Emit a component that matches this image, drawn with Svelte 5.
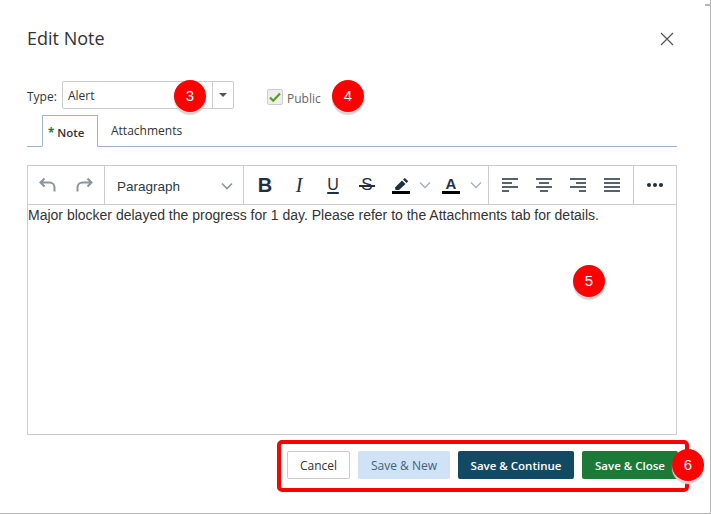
<script>
  const buttons = [
    { label: "Cancel", cls: "cancel" },
    { label: "Save & New", cls: "new" },
    { label: "Save & Continue", cls: "cont" },
    { label: "Save & Close", cls: "close" },
  ];
</script>

<main class="dialog">
  <div class="corner"></div>
  <header>
    <h1>Edit Note</h1>
    <svg class="x" width="14" height="14" viewBox="0 0 14 14"><path d="M1 1l12 12M13 1L1 13" stroke="#555" stroke-width="1.2" fill="none" /></svg>
  </header>

  <div class="type-row">
    <span class="type-label">Type:</span>
    <div class="select">
      <span class="value">Alert</span>
      <span class="arrow"><i></i></span>
    </div>
    <label class="public">
      <span class="check">
        <svg width="14" height="12" viewBox="0 0 14 12"><path d="M2 6.5l3.2 3.2L12 2.5" stroke="#5a9e1f" stroke-width="2.2" fill="none" /></svg>
      </span>
      <span class="public-text">Public</span>
    </label>
  </div>

  <nav class="tabs">
    <div class="tab active"><span class="star">*</span> Note</div>
    <div class="tab">Attachments</div>
  </nav>

  <section class="editor">
    <div class="toolbar">
      <div class="group history">
        <svg width="20" height="20" viewBox="0 0 20 20"><path d="M6.500 3.500L2.500 7.500l4 4M3 7.500h8.500a5 5 0 0 1 5 5v4" stroke="#8a949c" stroke-width="2" fill="none" /></svg>
        <svg width="20" height="20" viewBox="0 0 20 20"><path d="M13.500 3.500l4 4-4 4M17 7.500H8.500a5 5 0 0 0-5 5v4" stroke="#8a949c" stroke-width="2" fill="none" /></svg>
      </div>
      <div class="group para">
        <span>Paragraph</span>
        <svg class="chev" width="12" height="8" viewBox="0 0 12 8"><path d="M1 1.500l5 5 5-5" stroke="#8a949c" stroke-width="1.600" fill="none" /></svg>
      </div>
      <div class="group fmt">
        <span class="b">B</span>
        <span class="i">I</span>
        <span class="u">U</span>
        <span class="s">S</span>
        <span class="color pen">
          <svg width="18" height="14" viewBox="0 0 18 14"><path d="M3 10.500L10 3.500l3.500 3.500L7 13H3.500z" fill="#1f2f3f" /><path d="M11 2.500L12.800 1l3.500 3.200L14.500 6z" fill="#1f2f3f" /></svg>
          <em class="bar"></em>
        </span>
        <svg class="chev" width="12" height="8" viewBox="0 0 12 8"><path d="M1 1.500l5 5 5-5" stroke="#a9b1b7" stroke-width="1.400" fill="none" /></svg>
        <span class="color font"><span class="a">A</span><em class="bar"></em></span>
        <svg class="chev" width="12" height="8" viewBox="0 0 12 8"><path d="M1 1.500l5 5 5-5" stroke="#a9b1b7" stroke-width="1.400" fill="none" /></svg>
      </div>
      <div class="group align">
        <svg width="18" height="16" viewBox="0 0 18 16"><path d="M1 2h16M1 6h10M1 10h16M1 14h7" stroke="#1f2f3f" stroke-width="1.700" /></svg>
        <svg width="18" height="16" viewBox="0 0 18 16"><path d="M1 2h16M4 6h10M1 10h16M5 14h8" stroke="#1f2f3f" stroke-width="1.700" /></svg>
        <svg width="18" height="16" viewBox="0 0 18 16"><path d="M1 2h16M7 6h10M1 10h16M10 14h7" stroke="#1f2f3f" stroke-width="1.700" /></svg>
        <svg width="18" height="16" viewBox="0 0 18 16"><path d="M1 2h16M1 6h16M1 10h16M1 14h16" stroke="#1f2f3f" stroke-width="1.700" /></svg>
      </div>
      <div class="group more">
        <svg width="18" height="6" viewBox="0 0 18 6"><circle cx="3" cy="3" r="2" fill="#1f2f3f" /><circle cx="9" cy="3" r="2" fill="#1f2f3f" /><circle cx="15" cy="3" r="2" fill="#1f2f3f" /></svg>
      </div>
    </div>
    <div class="body">Major blocker delayed the progress for 1 day. Please refer to the Attachments tab for details.</div>
  </section>

  <footer>
    <div class="actions">
      {#each buttons as b}
        <button class={b.cls}>{b.label}</button>
      {/each}
    </div>
  </footer>

  <!-- annotation callouts sit over the dialog -->
  <div class="badge" style="left:174px;top:80px">3</div>
  <div class="badge" style="left:332px;top:80px">4</div>
  <div class="badge" style="left:573px;top:265px">5</div>
  <div class="badge" style="left:672px;top:449px">6</div>
</main>

<style>
  :global(body) {
    margin: 0;
    background: #fff;
  }
  .dialog {
    position: relative;
    box-sizing: border-box;
    width: 711px;
    height: 514px;
    padding: 0 33px 0 27px;
    border-right: 1px solid #b5b5b5;
    border-bottom: 1px solid #b5b5b5;
    font-family: "Open Sans", sans-serif;
    color: #333;
    overflow: hidden;
  }
  .corner {
    position: absolute;
    right: 0;
    top: 4px;
    width: 5px;
    height: 2px;
    background: #b5b5b5;
  }
  header {
    display: flex;
    justify-content: space-between;
    align-items: center;
    height: 78px;
  }
  h1 {
    margin: -2px 0 0;
    font-size: 18px;
    font-weight: 400;
    color: #333;
  }
  .x {
    margin-right: 3px;
  }
  .type-row {
    display: flex;
    align-items: center;
    height: 28px;
    margin-top: 3px;
    font-size: 12px;
  }
  .type-label {
    width: 35px;
    margin-top: 3px;
  }
  .select {
    box-sizing: border-box;
    display: flex;
    justify-content: space-between;
    width: 172px;
    height: 28px;
    border: 1px solid #ccc;
    border-radius: 2px;
  }
  .value {
    padding-left: 5px;
    line-height: 27px;
  }
  .arrow {
    display: flex;
    align-items: center;
    justify-content: center;
    width: 20px;
    border-left: 1px solid #ccc;
  }
  .arrow i {
    border-left: 4px solid transparent;
    border-right: 4px solid transparent;
    border-top: 4px solid #555;
  }
  .public {
    display: flex;
    align-items: center;
    gap: 4px;
    margin-left: 33px;
    color: #666;
    font-size: 12px;
    padding-top: 5px;
  }
  .public-text {
    margin-top: 2px;
  }
  .check {
    box-sizing: border-box;
    display: flex;
    align-items: center;
    justify-content: center;
    width: 16px;
    height: 16px;
    margin-top: -2px;
    background: #eee;
    border: 1px solid #ccc;
    border-radius: 2px;
  }
  .tabs {
    display: flex;
    height: 32px;
    margin-top: 6px;
    box-sizing: border-box;
    border-bottom: 1px solid #9db4cf;
  }
  .tab {
    box-sizing: border-box;
    height: 32px;
    padding: 7px 13px 0;
    font-size: 12px;
    line-height: 17px;
  }
  .tab.active {
    margin-left: 15px;
    width: 56px;
    padding: 8px 0 0 5px;
    border: 1px solid #9db4cf;
    border-bottom: 1px solid #fff;
    font-weight: 600;
    font-size: 11.5px;
    white-space: nowrap;
  }
  .star {
    color: #1b7a36;
    font-weight: 700;
  }
  .editor {
    box-sizing: border-box;
    height: 270px;
    margin-top: 18px;
    border: 1px solid #ccc;
  }
  .toolbar {
    display: flex;
    box-sizing: border-box;
    height: 39px;
    border-bottom: 1px solid #ccc;
  }
  .group {
    box-sizing: border-box;
    display: flex;
    align-items: center;
    border-right: 1px solid #ccc;
  }
  .group:last-child {
    border-right: 0;
  }
  .history {
    width: 77px;
    padding-left: 10px;
    gap: 16px;
  }
  .para {
    width: 139px;
    padding: 2px 10px 0 12px;
    justify-content: space-between;
    font-family: "Liberation Sans", sans-serif;
    font-size: 13.5px;
    color: #2b3a48;
  }
  .fmt {
    width: 245px;
    padding-left: 12px;
    color: #1f2f3f;
    font-family: "Liberation Sans", sans-serif;
  }
  .fmt > span {
    display: flex;
    justify-content: center;
    width: 18px;
    margin-right: 16px;
    font-size: 18px;
  }
  .fmt .b {
    font-size: 20px;
    font-weight: 700;
  }
  .fmt .i {
    font-family: "Liberation Serif", serif;
    font-style: italic;
    font-size: 20px;
  }
  .fmt .u {
    text-decoration: underline;
    text-decoration-thickness: 2px;
    text-underline-offset: 2px;
    font-size: 16px;
  }
  .fmt .s {
    position: relative;
    font-size: 17px;
  }
  .fmt .s::after {
    content: "";
    position: absolute;
    left: 1px;
    right: 1px;
    top: 10px;
    height: 1.5px;
    background: #1f2f3f;
  }
  .fmt .color {
    flex-direction: column;
    align-items: center;
    width: 18px;
    margin-right: 9px;
  }
  .fmt .font {
    margin-left: 11px;
    margin-right: 10px;
  }
  .a {
    font-size: 15px;
    line-height: 15px;
    font-weight: 700;
  }
  .bar {
    display: block;
    width: 18px;
    height: 3px;
    background: #000;
  }
  .align {
    width: 145px;
    padding-left: 12px;
    gap: 16px;
  }
  .more {
    flex: 1;
    justify-content: center;
  }
  .body {
    padding: 2px 0 0 0;
    font-family: "Liberation Sans", sans-serif;
    font-size: 14px;
    line-height: 16px;
    color: #333;
  }
  footer {
    display: flex;
    justify-content: flex-end;
    margin: 5px -12px 0 0;
  }
  .actions {
    box-sizing: border-box;
    display: flex;
    gap: 8px;
    width: 412px;
    height: 52px;
    padding: 11px 0 0 6px;
    border: 4px solid #f00;
    border-radius: 5px;
  }
  button {
    box-sizing: border-box;
    height: 28px;
    padding: 0;
    border: 1px solid transparent;
    border-radius: 2px;
    font-family: "Open Sans", sans-serif;
    font-size: 11.5px;
    font-weight: 600;
    margin-top: -4px;
  }
  .cancel {
    width: 63px;
    background: #fff;
    border-color: #ccc;
    color: #333;
    font-weight: 400;
    font-size: 12px;
  }
  .new {
    width: 92px;
    background: #cfe2f6;
    color: #3f627c;
    font-weight: 400;
    font-size: 12px;
  }
  .cont {
    width: 116px;
    background: #134a63;
    color: #fff;
  }
  .close {
    width: 96px;
    background: #1b7a36;
    color: #fff;
  }
  .badge {
    position: absolute;
    width: 32px;
    height: 32px;
    border-radius: 50%;
    background: #f00;
    color: #fff;
    font-family: "Liberation Sans", sans-serif;
    font-size: 15px;
    line-height: 32px;
    text-align: center;
    box-shadow: 0 3px 1px #d5d5d5;
    border: 0;
  }
</style>
